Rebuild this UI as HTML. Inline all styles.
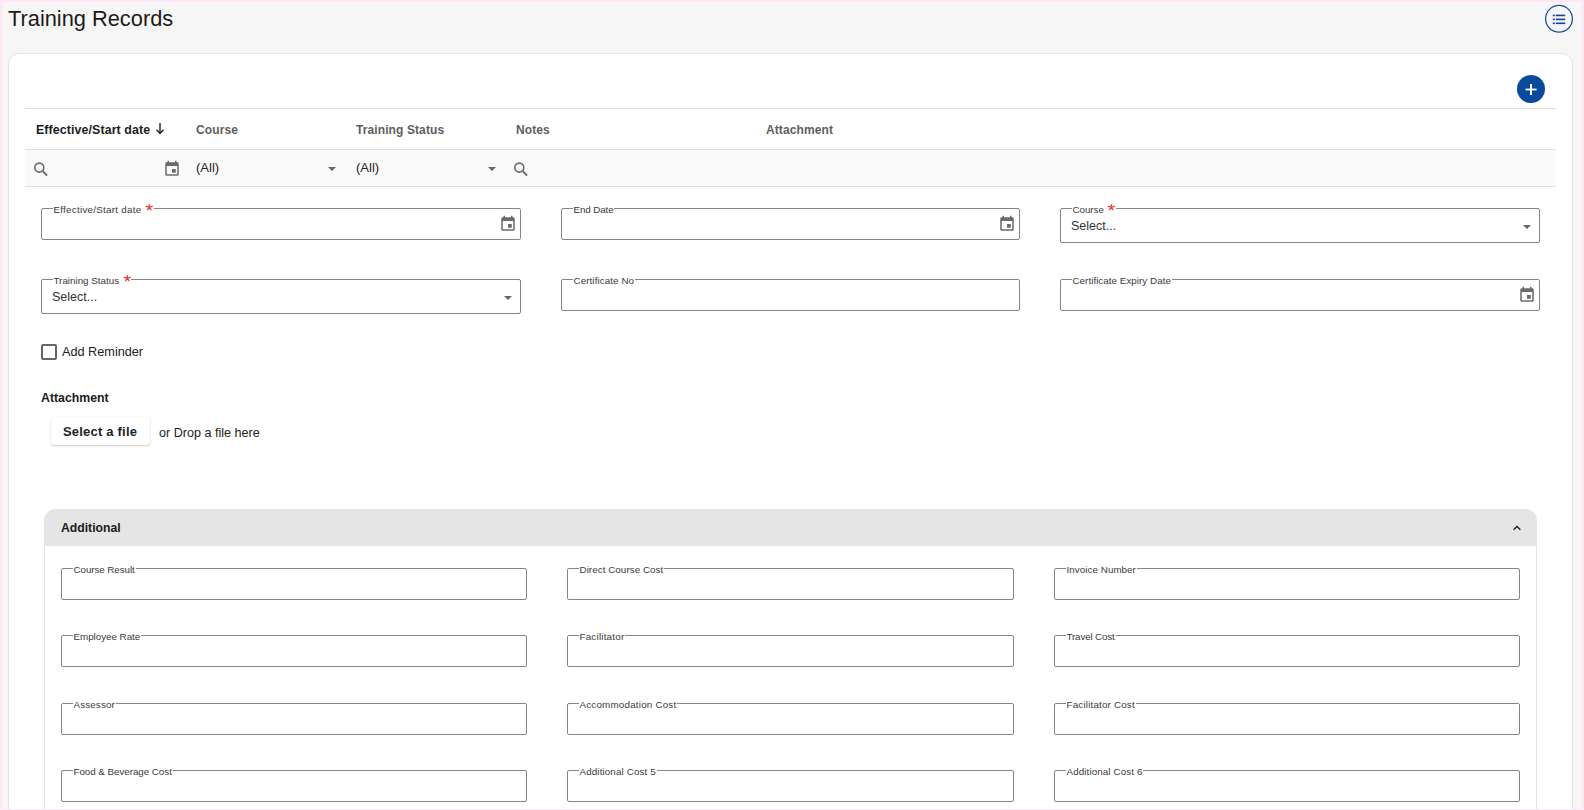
<!DOCTYPE html>
<html><head><meta charset="utf-8">
<style>
*{box-sizing:border-box;margin:0;padding:0}
html,body{width:1584px;height:810px;overflow:hidden}
body{font-family:"Liberation Sans",sans-serif;background:#fde6f7;position:relative}
.abs{position:absolute}
#page{position:absolute;left:2px;top:2px;width:1580px;height:807px;background:#f6f6f6;overflow:hidden}
#title{position:absolute;left:8.5px;top:3px;font-size:21.5px;color:#1b1b1b;line-height:26px;white-space:nowrap}
#card{position:absolute;left:8px;top:53px;width:1565px;height:800px;background:#fff;border:1px solid #e3e3e3;border-radius:11px}
.hline{position:absolute;height:1px;background:#e0e0e0}
.th{position:absolute;top:122.6px;font-size:12px;font-weight:bold;color:#5e5e5e;letter-spacing:0.1px;white-space:nowrap;line-height:14px}
.fl{position:absolute;font-size:13px;color:#222;white-space:nowrap;line-height:15px}
.fs{position:absolute;border:1px solid #858585;border-radius:2px;background:#fff}
.lg{position:absolute;left:10.5px;top:-5px;background:#fff;padding:0 1px;font-size:9.8px;letter-spacing:0.2px;line-height:12px;color:#3a3a3a;white-space:nowrap}
.lg .ast{position:relative;display:inline-block;vertical-align:top;top:-0.3px;margin-left:3.5px;margin-right:-1.5px}
.lg b{color:#ee3b3b;font-weight:normal;font-size:14px;position:relative;top:1px;margin-left:3px}
.sel{position:absolute;left:10px;font-size:12.5px;color:#333;white-space:nowrap;line-height:15px}
.arrow{position:absolute;width:0;height:0;border-left:4px solid transparent;border-right:4px solid transparent;border-top:4px solid #666}
svg{position:absolute;display:block}
</style></head>
<body>
<div id="page"></div>
<div id="title" class="abs" style="left:8px;top:6px;font-size:21.8px">Training Records</div>

<!-- list icon -->
<svg style="left:1544px;top:4px" width="30" height="30" viewBox="0 0 30 30"><circle cx="15" cy="14.8" r="13.4" stroke="#1a4e9e" stroke-width="1.25" fill="none"/></svg>
<svg style="left:1552px;top:14px" width="14" height="11" viewBox="0 0 14 11">
  <rect x="0.8" y="0.6" width="2" height="1.6" fill="#0d47a1"/><rect x="3.8" y="0.6" width="9.4" height="1.6" fill="#0d47a1"/>
  <rect x="0.8" y="4.6" width="2" height="1.6" fill="#0d47a1"/><rect x="3.8" y="4.6" width="9.4" height="1.6" fill="#0d47a1"/>
  <rect x="0.8" y="8.5" width="2" height="1.6" fill="#0d47a1"/><rect x="3.8" y="8.5" width="9.4" height="1.6" fill="#0d47a1"/>
</svg>

<div id="card"></div>

<!-- plus button -->
<div class="abs" style="left:1517px;top:75px;width:28px;height:28px;background:#0a4a9d;border-radius:50%"></div>
<svg style="left:1525px;top:83px" width="12" height="12" viewBox="0 0 12 12">
  <rect x="5" y="1" width="2" height="11" fill="#fff"/><rect x="0.6" y="5.6" width="11" height="1.8" fill="#fff"/>
</svg>

<!-- table header -->
<div class="hline" style="left:25px;top:108px;width:1531px"></div>
<div class="th" style="left:36px;color:#1c1c1c;font-size:12.4px">Effective/Start date</div>
<svg style="left:155px;top:122px" width="10" height="13" viewBox="0 0 10 13"><path d="M5 1 V11 M1.5 7.8 L5 11.5 L8.5 7.8" stroke="#222" stroke-width="1.4" fill="none"/></svg>
<div class="th" style="left:196px">Course</div>
<div class="th" style="left:356px">Training Status</div>
<div class="th" style="left:516px">Notes</div>
<div class="th" style="left:766px">Attachment</div>
<div class="hline" style="left:25px;top:149px;width:1531px"></div>
<div class="abs" style="left:25px;top:150px;width:1531px;height:36px;background:#fafafa"></div>
<div class="hline" style="left:25px;top:186px;width:1531px"></div>

<!-- filter row -->
<svg style="left:30px;top:160px" width="20" height="20" viewBox="0 0 20 20"><circle cx="9.3" cy="7.6" r="4.5" stroke="#6a6a6a" stroke-width="1.6" fill="none"/><path d="M12.5 10.9L17.1 15.5" stroke="#6a6a6a" stroke-width="1.9" fill="none"/></svg>
<svg style="left:163px;top:160px" width="18" height="18" viewBox="0 0 24 24"><path fill="#6a6a6a" d="M17 12h-5v5h5v-5zM16 1v2H8V1H6v2H5c-1.11 0-1.99.9-1.99 2L3 19c0 1.1.89 2 2 2h14c1.1 0 2-.9 2-2V5c0-1.1-.9-2-2-2h-1V1h-2zm3 18H5V8h14v11z"/></svg>
<div class="fl" style="left:196px;top:160px">(All)</div>
<div class="arrow" style="left:328px;top:167px"></div>
<div class="fl" style="left:356px;top:160px">(All)</div>
<div class="arrow" style="left:488px;top:167px"></div>
<svg style="left:510px;top:160px" width="20" height="20" viewBox="0 0 20 20"><circle cx="9.3" cy="7.6" r="4.5" stroke="#6a6a6a" stroke-width="1.6" fill="none"/><path d="M12.5 10.9L17.1 15.5" stroke="#6a6a6a" stroke-width="1.9" fill="none"/></svg>

<!-- form row 1 -->
<div class="fs" style="left:41px;top:208px;width:480px;height:32px">
  <div class="lg" style="letter-spacing:0.27px">Effective/Start date<svg class="ast" width="9" height="8" viewBox="0 0 9 8"><path d="M4.3 3.1V0.7M4.3 3.1L1.2 2.4M4.3 3.1L7.4 2.4M4.3 3.1L2.6 5.7M4.3 3.1L6.0 5.7" stroke="#f03a30" stroke-width="1.3" stroke-linecap="round" fill="none"/></svg></div>
  <svg style="left:457px;top:6px" width="18" height="18" viewBox="0 0 24 24"><path fill="#6a6a6a" d="M17 12h-5v5h5v-5zM16 1v2H8V1H6v2H5c-1.11 0-1.99.9-1.99 2L3 19c0 1.1.89 2 2 2h14c1.1 0 2-.9 2-2V5c0-1.1-.9-2-2-2h-1V1h-2zm3 18H5V8h14v11z"/></svg>
</div>
<div class="fs" style="left:561px;top:208px;width:459px;height:32px">
  <div class="lg" style="letter-spacing:-0.11px">End Date</div>
  <svg style="left:436px;top:6px" width="18" height="18" viewBox="0 0 24 24"><path fill="#6a6a6a" d="M17 12h-5v5h5v-5zM16 1v2H8V1H6v2H5c-1.11 0-1.99.9-1.99 2L3 19c0 1.1.89 2 2 2h14c1.1 0 2-.9 2-2V5c0-1.1-.9-2-2-2h-1V1h-2zm3 18H5V8h14v11z"/></svg>
</div>
<div class="fs" style="left:1060px;top:208px;width:480px;height:35px">
  <div class="lg" style="letter-spacing:-0.04px">Course<svg class="ast" width="9" height="8" viewBox="0 0 9 8"><path d="M4.3 3.1V0.7M4.3 3.1L1.2 2.4M4.3 3.1L7.4 2.4M4.3 3.1L2.6 5.7M4.3 3.1L6.0 5.7" stroke="#f03a30" stroke-width="1.3" stroke-linecap="round" fill="none"/></svg></div>
  <div class="sel" style="top:10px">Select...</div>
  <div class="arrow" style="left:462px;top:16px"></div>
</div>

<!-- form row 2 -->
<div class="fs" style="left:41px;top:279px;width:480px;height:35px">
  <div class="lg" style="letter-spacing:0.0px">Training Status<svg class="ast" width="9" height="8" viewBox="0 0 9 8"><path d="M4.3 3.1V0.7M4.3 3.1L1.2 2.4M4.3 3.1L7.4 2.4M4.3 3.1L2.6 5.7M4.3 3.1L6.0 5.7" stroke="#f03a30" stroke-width="1.3" stroke-linecap="round" fill="none"/></svg></div>
  <div class="sel" style="top:10px">Select...</div>
  <div class="arrow" style="left:462px;top:16px"></div>
</div>
<div class="fs" style="left:561px;top:279px;width:459px;height:32px">
  <div class="lg" style="letter-spacing:0.09px">Certificate No</div>
</div>
<div class="fs" style="left:1060px;top:279px;width:480px;height:32px">
  <div class="lg" style="letter-spacing:0.04px">Certificate Expiry Date</div>
  <svg style="left:457px;top:6px" width="18" height="18" viewBox="0 0 24 24"><path fill="#6a6a6a" d="M17 12h-5v5h5v-5zM16 1v2H8V1H6v2H5c-1.11 0-1.99.9-1.99 2L3 19c0 1.1.89 2 2 2h14c1.1 0 2-.9 2-2V5c0-1.1-.9-2-2-2h-1V1h-2zm3 18H5V8h14v11z"/></svg>
</div>

<!-- checkbox -->
<div class="abs" style="left:41px;top:344px;width:16px;height:16px;border:2px solid #666;border-radius:2px"></div>
<div class="fl" style="left:62px;top:345px;font-size:12.7px">Add Reminder</div>

<!-- attachment -->
<div class="abs" style="left:41px;top:391px;font-size:12.3px;font-weight:bold;color:#1b1b1b;line-height:14px">Attachment</div>
<div class="abs" style="left:51px;top:417px;width:99px;height:28px;background:#fff;border-radius:3px;box-shadow:0 1px 2px rgba(0,0,0,0.2),0 0 1px rgba(0,0,0,0.12)"></div>
<div class="abs" style="left:63px;top:425px;font-size:13px;font-weight:bold;color:#222;line-height:14px;letter-spacing:0.2px">Select a file</div>
<div class="fl" style="left:159px;top:426px;font-size:12.6px">or Drop a file here</div>

<!-- additional panel -->
<div class="abs" style="left:44px;top:509px;width:1493px;height:320px;border:1px solid #e3e3e3;border-radius:12px 12px 0 0;background:#fff"></div>
<div class="abs" style="left:44px;top:509px;width:1493px;height:37px;background:#e5e5e5;border-radius:12px 12px 0 0"></div>
<div class="abs" style="left:61px;top:521px;font-size:12.2px;font-weight:bold;color:#1b1b1b;line-height:14px">Additional</div>
<svg style="left:1511px;top:522px" width="12" height="10" viewBox="0 0 12 10"><path d="M2.6 7.8 L6 4.4 L9.4 7.8" stroke="#222" stroke-width="1.35" fill="none"/></svg>

<div class="fs" style="left:61px;top:568px;width:466px;height:32px"><div class="lg" style="letter-spacing:-0.07px">Course Result</div></div>
<div class="fs" style="left:567px;top:568px;width:447px;height:32px"><div class="lg" style="letter-spacing:0.06px">Direct Course Cost</div></div>
<div class="fs" style="left:1054px;top:568px;width:466px;height:32px"><div class="lg" style="letter-spacing:0.06px">Invoice Number</div></div>
<div class="fs" style="left:61px;top:635px;width:466px;height:32px"><div class="lg" style="letter-spacing:-0.02px">Employee Rate</div></div>
<div class="fs" style="left:567px;top:635px;width:447px;height:32px"><div class="lg" style="letter-spacing:0.22px">Facilitator</div></div>
<div class="fs" style="left:1054px;top:635px;width:466px;height:32px"><div class="lg" style="letter-spacing:-0.14px">Travel Cost</div></div>
<div class="fs" style="left:61px;top:703px;width:466px;height:32px"><div class="lg" style="letter-spacing:0.14px">Assessor</div></div>
<div class="fs" style="left:567px;top:703px;width:447px;height:32px"><div class="lg" style="letter-spacing:0.21px">Accommodation Cost</div></div>
<div class="fs" style="left:1054px;top:703px;width:466px;height:32px"><div class="lg" style="letter-spacing:0.19px">Facilitator Cost</div></div>
<div class="fs" style="left:61px;top:770px;width:466px;height:32px"><div class="lg" style="letter-spacing:-0.04px">Food &amp; Beverage Cost</div></div>
<div class="fs" style="left:567px;top:770px;width:447px;height:32px"><div class="lg" style="letter-spacing:0.13px">Additional Cost 5</div></div>
<div class="fs" style="left:1054px;top:770px;width:466px;height:32px"><div class="lg" style="letter-spacing:0.11px">Additional Cost 6</div></div>
<div style="position:absolute;left:0;top:0;width:1584px;height:810px;border-style:solid;border-color:#fde6f7;border-width:2px 2px 1px 2px;z-index:99;pointer-events:none"></div>
</body></html>
